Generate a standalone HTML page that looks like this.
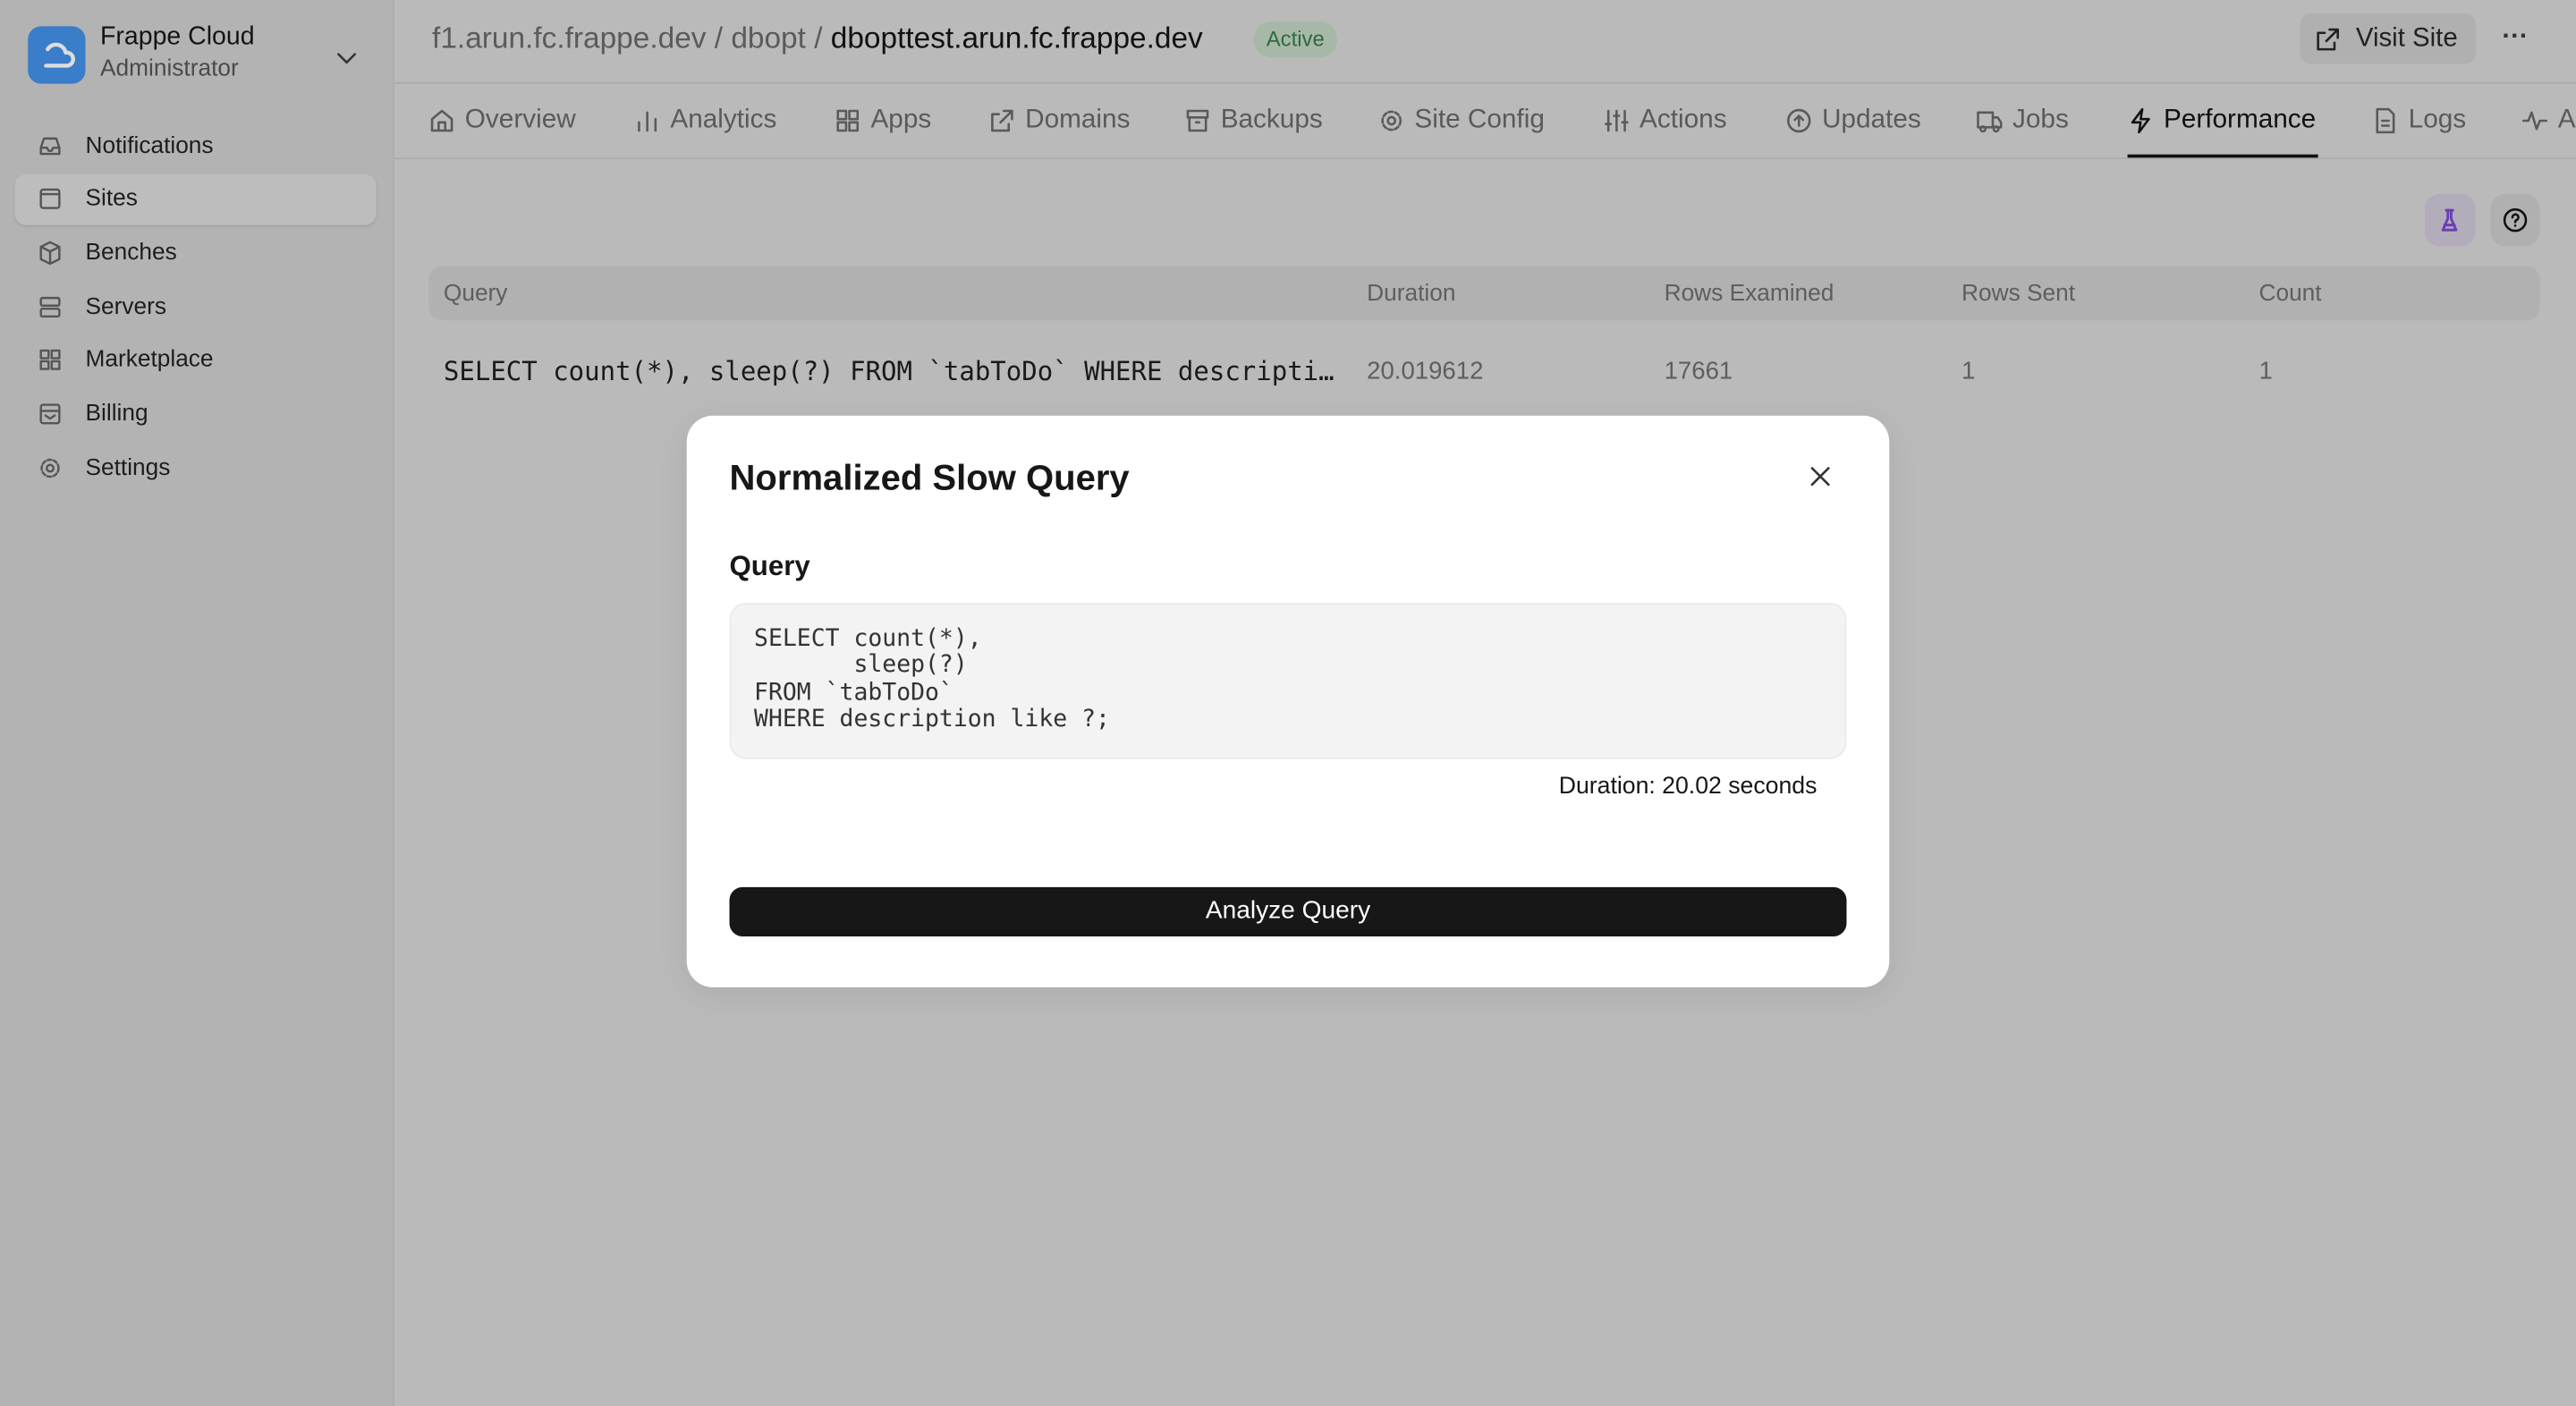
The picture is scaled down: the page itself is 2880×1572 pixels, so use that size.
<!DOCTYPE html>
<html><head><meta charset="utf-8"><style>
html,body{margin:0;padding:0;width:2880px;height:1572px;overflow:hidden;background:#bababa}
#w{position:absolute;left:0;top:0;width:1568px;height:856px;transform:scale(1.836735);transform-origin:0 0;font-family:"Liberation Sans",sans-serif;background:#bababa}
.a{position:absolute;white-space:nowrap}
#sb{position:absolute;left:0;top:0;width:239px;height:856px;background:#b3b3b3;border-right:1px solid #adadad}
.nav{position:absolute;left:52px;font-size:14.3px;color:#1d1d1d;transform:translateY(-50%)}
.ni{position:absolute;left:23px;width:15px;height:15px;transform:translateY(-50%)}
.tab{position:absolute;top:73px;transform:translateY(-50%);font-size:16.2px;color:#5a5a5a;display:flex;align-items:center;gap:6px}
.tab svg{width:16px;height:16px}
.th{position:absolute;top:179px;transform:translateY(-50%);font-size:14.3px;color:#5e5e5e}
.td{position:absolute;top:226px;transform:translateY(-50%);font-size:15px;color:#5e5e5e}
svg{fill:none;stroke:currentColor;stroke-width:1.4;stroke-linecap:round;stroke-linejoin:round}
</style></head><body><div id="w">
<div id="sb">
 <div class="a" style="left:17px;top:16px;width:35px;height:35px;border-radius:8px;background:#3a7dc9"><svg viewBox="0 0 35 35" style="width:35px;height:35px;color:#ddd;stroke-width:2.4"><path d="M12 14a6 6 0 0 1 11 2a4 4 0 0 1 1 8H11"/></svg></div>
 <div class="a" style="left:61px;top:14px;font-size:15.5px;color:#141414">Frappe Cloud</div>
 <div class="a" style="left:61px;top:34px;font-size:14.3px;color:#4a4a4a">Administrator</div>
 <svg class="a" viewBox="0 0 16 16" style="left:203px;top:27px;width:16px;height:16px;color:#333"><path d="M3 6l5 5 5-5"/></svg>
 <div class="a" style="left:9px;top:106px;width:220px;height:31px;border-radius:7px;background:#bdbdbd;box-shadow:0 1px 2px rgba(0,0,0,.1)"></div>
 <svg class="ni" style="top:89px;color:#555" viewBox="0 0 16 16"><path d="M2 9l2-6h8l2 6v4H2z M2 9h4l1 2h2l1-2h4"/></svg><div class="nav" style="top:89px">Notifications</div>
 <svg class="ni" style="top:121px;color:#555" viewBox="0 0 16 16"><rect x="2" y="2" width="12" height="12" rx="1.5"/><path d="M2 5h12"/></svg><div class="nav" style="top:121px">Sites</div>
 <svg class="ni" style="top:154px;color:#555" viewBox="0 0 16 16"><path d="M8 1l6 3v8l-6 3-6-3V4z M2 4l6 3 6-3 M8 7v8"/></svg><div class="nav" style="top:154px">Benches</div>
 <svg class="ni" style="top:187px;color:#555" viewBox="0 0 16 16"><rect x="2" y="2" width="12" height="5" rx="1"/><rect x="2" y="9" width="12" height="5" rx="1"/></svg><div class="nav" style="top:187px">Servers</div>
 <svg class="ni" style="top:219px;color:#555" viewBox="0 0 16 16"><rect x="2" y="2" width="5" height="5"/><rect x="9" y="2" width="5" height="5"/><rect x="2" y="9" width="5" height="5"/><rect x="9" y="9" width="5" height="5"/></svg><div class="nav" style="top:219px">Marketplace</div>
 <svg class="ni" style="top:252px;color:#555" viewBox="0 0 16 16"><rect x="2" y="2" width="12" height="12" rx="1.5"/><path d="M2 6h12 M5 9l3 2 3-2"/></svg><div class="nav" style="top:252px">Billing</div>
 <svg class="ni" style="top:285px;color:#555" viewBox="0 0 16 16"><circle cx="8" cy="8" r="2.2"/><circle cx="8" cy="8" r="5.5" stroke-dasharray="2.5 1.5"/></svg><div class="nav" style="top:285px">Settings</div>
</div>
<div class="a" style="left:263px;top:13px;font-size:18.2px;color:#5b5b5b">f1.arun.fc.frappe.dev / dbopt / <span style="color:#111">dbopttest.arun.fc.frappe.dev</span></div>
<div class="a" style="left:763px;top:13px;width:51px;height:22px;border-radius:11px;background:#a7b8a9;color:#2e6b3a;font-size:13px;line-height:22px;text-align:center">Active</div>
<div class="a" style="left:1400px;top:8px;width:107px;height:31px;border-radius:7px;background:#b0b0b0;color:#222;font-size:16px;line-height:31px"><svg viewBox="0 0 16 16" style="position:absolute;left:9px;top:8px;width:16px;height:16px"><path d="M9 2h5v5 M14 2L7 9 M12 10v4H2V4h4"/></svg><span style="position:absolute;left:34px">Visit Site</span></div>
<div class="a" style="left:1523px;top:14px;font-size:16px;color:#333;font-weight:bold">···</div>
<div class="a" style="left:240px;top:50px;width:1328px;height:1px;background:#acacac"></div>
<div class="a" style="left:240px;top:96px;width:1328px;height:1px;background:#acacac"></div>
<div class="tab" style="left:261px"><svg viewBox="0 0 16 16"><path d="M2 7l6-5 6 5v7H2z M6 14V9h4v5"/></svg>Overview</div>
<div class="tab" style="left:386px"><svg viewBox="0 0 16 16"><path d="M3 14V9 M8 14V3 M13 14V7"/></svg>Analytics</div>
<div class="tab" style="left:508px"><svg viewBox="0 0 16 16"><rect x="2" y="2" width="5" height="5"/><rect x="9" y="2" width="5" height="5"/><rect x="2" y="9" width="5" height="5"/><rect x="9" y="9" width="5" height="5"/></svg>Apps</div>
<div class="tab" style="left:602px"><svg viewBox="0 0 16 16"><path d="M9 2h5v5 M14 2L7 9 M12 10v4H2V4h4"/></svg>Domains</div>
<div class="tab" style="left:721px"><svg viewBox="0 0 16 16"><rect x="2" y="2" width="12" height="4"/><path d="M3 6v8h10V6 M7 9h2"/></svg>Backups</div>
<div class="tab" style="left:839px"><svg viewBox="0 0 16 16"><circle cx="8" cy="8" r="2.2"/><circle cx="8" cy="8" r="5.5" stroke-dasharray="2.5 1.5"/></svg>Site Config</div>
<div class="tab" style="left:976px"><svg viewBox="0 0 16 16"><path d="M3 2v12 M8 2v12 M13 2v12 M1.5 10h3 M6.5 5h3 M11.5 9h3"/></svg>Actions</div>
<div class="tab" style="left:1087px"><svg viewBox="0 0 16 16"><circle cx="8" cy="8" r="6.5"/><path d="M8 11V5 M5.5 7.5L8 5l2.5 2.5"/></svg>Updates</div>
<div class="tab" style="left:1203px"><svg viewBox="0 0 16 16"><path d="M1 3h9v9H1z M10 6h3l2 3v3h-5"/><circle cx="4" cy="13" r="1.5"/><circle cx="12" cy="13" r="1.5"/></svg>Jobs</div>
<div class="tab" style="left:1295px;color:#111"><svg viewBox="0 0 16 16"><path d="M9 1L3 9h5l-1 6 6-8H8z"/></svg>Performance</div>
<div class="a" style="left:1295px;top:94px;width:116px;height:2px;background:#111"></div>
<div class="tab" style="left:1444px"><svg viewBox="0 0 16 16"><path d="M3 1h7l3 3v11H3z M6 8h4 M6 11h4"/></svg>Logs</div>
<div class="tab" style="left:1535px"><svg viewBox="0 0 16 16"><path d="M1 8h3l2-5 3 10 2-5h4"/></svg>A</div>
<div class="a" style="left:1476px;top:118px;width:31px;height:32px;border-radius:9px;background:#b3adbb;color:#6a3fb5"><svg viewBox="0 0 16 16" style="position:absolute;left:7px;top:8px;width:16px;height:16px;stroke-width:1.6"><path d="M6 2h4 M7 2v5l-3 7h8l-3-7V2 M5 11h6"/></svg></div>
<div class="a" style="left:1516px;top:118px;width:30px;height:32px;border-radius:9px;background:#b0b0b0;color:#111"><svg viewBox="0 0 16 16" style="position:absolute;left:7px;top:8px;width:16px;height:16px"><circle cx="8" cy="8" r="6.5"/><path d="M6.3 6.3a1.8 1.8 0 1 1 2.4 1.7c-.5.3-.7.6-.7 1.2 M8 11.3v.1"/></svg></div>
<div class="a" style="left:261px;top:162px;width:1285px;height:33px;border-radius:8px;background:#b1b1b1"></div>
<div class="th" style="left:270px">Query</div><div class="th" style="left:832px">Duration</div><div class="th" style="left:1013px">Rows Examined</div><div class="th" style="left:1194px">Rows Sent</div><div class="th" style="left:1375px">Count</div>
<div class="td" style="left:270px;font-family:'DejaVu Sans Mono','Liberation Mono',monospace;font-size:15.8px;color:#1a1a1a">SELECT count(*), sleep(?) FROM `tabToDo` WHERE descripti…</div>
<div class="td" style="left:832px">20.019612</div><div class="td" style="left:1013px">17661</div><div class="td" style="left:1194px">1</div><div class="td" style="left:1375px">1</div>
<div class="a" style="left:418px;top:253px;width:732px;height:348px;border-radius:16px;background:#fff;box-shadow:0 4px 20px rgba(0,0,0,.08)">
 <div class="a" style="left:26px;top:25px;font-size:21.8px;font-weight:bold;color:#171717">Normalized Slow Query</div>
 <svg class="a" viewBox="0 0 16 16" style="left:682px;top:29px;width:16px;height:16px;color:#333"><path d="M3 3l10 10 M13 3L3 13"/></svg>
 <div class="a" style="left:26px;top:82px;font-size:17px;font-weight:bold;color:#171717">Query</div>
 <div class="a" style="left:26px;top:114px;width:678px;height:93px;border-radius:10px;background:#f3f3f3;border:1px solid #ebebeb"></div>
 <pre class="a" style="left:41px;top:128px;margin:0;white-space:pre;font-family:'DejaVu Sans Mono','Liberation Mono',monospace;font-size:14.4px;line-height:16.4px;color:#333">SELECT count(*),
       sleep(?)
FROM `tabToDo`
WHERE description like ?;</pre>
 <div class="a" style="right:44px;top:218px;font-size:14.5px;color:#171717">Duration: 20.02 seconds</div>
 <div class="a" style="left:26px;top:287px;width:680px;height:30px;border-radius:8px;background:#171717;color:#fff;font-size:15.3px;line-height:30px;text-align:center">Analyze Query</div>
</div>
</div></body></html>
